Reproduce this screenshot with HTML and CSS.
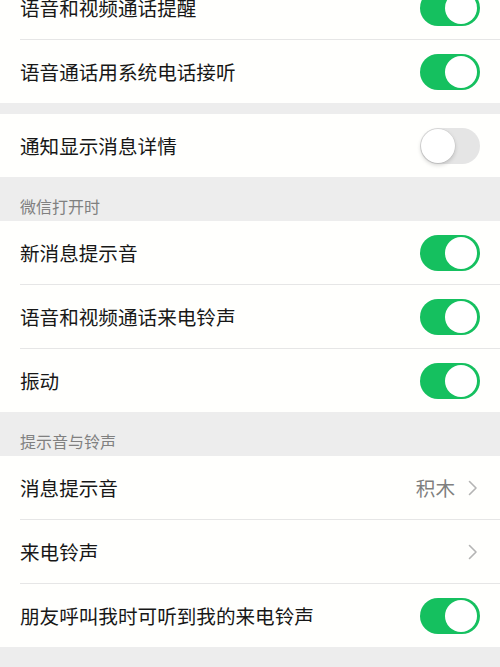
FILE: index.html
```html
<!DOCTYPE html>
<html>
<head>
  <title>新消息通知</title>
  <meta charset="UTF-8">
  <meta name="viewport" content="width=device-width, initial-scale=1">
  <link rel="stylesheet" href="styles.css">
</head>
<body>
  <div class="page">
    <div class="group group-top">
      <div class="row">
        <span class="label">语音和视频通话提醒</span>
        <span class="switch on"></span>
      </div>
      <div class="row">
        <span class="label">语音通话用系统电话接听</span>
        <span class="switch on"></span>
      </div>
    </div>

    <div class="spacer"></div>

    <div class="group">
      <div class="row">
        <span class="label">通知显示消息详情</span>
        <span class="switch"></span>
      </div>
    </div>

    <div class="section-title">微信打开时</div>
    <div class="group">
      <div class="row">
        <span class="label">新消息提示音</span>
        <span class="switch on"></span>
      </div>
      <div class="row">
        <span class="label">语音和视频通话来电铃声</span>
        <span class="switch on"></span>
      </div>
      <div class="row">
        <span class="label">振动</span>
        <span class="switch on"></span>
      </div>
    </div>

    <div class="section-title">提示音与铃声</div>
    <div class="group">
      <div class="row">
        <span class="label">消息提示音</span>
        <span class="extra">
          <span class="value">积木</span>
          <svg class="chevron" width="10" height="16" viewBox="0 0 10 16"><path d="M1.5 1.5 L8 8 L1.5 14.5" fill="none" stroke="#b4b4b4" stroke-width="1.6" stroke-linecap="round" stroke-linejoin="round"/></svg>
        </span>
      </div>
      <div class="row">
        <span class="label">来电铃声</span>
        <span class="extra">
          <svg class="chevron" width="10" height="16" viewBox="0 0 10 16"><path d="M1.5 1.5 L8 8 L1.5 14.5" fill="none" stroke="#b4b4b4" stroke-width="1.6" stroke-linecap="round" stroke-linejoin="round"/></svg>
        </span>
      </div>
      <div class="row">
        <span class="label">朋友呼叫我时可听到我的来电铃声</span>
        <span class="switch on"></span>
      </div>
    </div>
  </div>
</body>
</html>
```

FILE: styles.css
```css
body {
  font-family: "Noto Sans CJK SC", "Noto Sans", sans-serif;
  background: #ededed;
  margin: 0;
  padding: 0;
}
.page {
  min-height: 667px;
}
.group {
  background: #fffffd;
}
.group-top {
  margin-top: -24px;
}
.spacer {
  height: 11px;
}
.row {
  display: flex;
  align-items: center;
  justify-content: space-between;
  height: 63px;
  margin-left: 20px;
  padding-right: 20px;
}
.row + .row {
  border-top: 1px solid #e6e6e6;
}
.label {
  font-size: 19.6px;
  color: #171717;
}
.section-title {
  height: 44px;
  display: flex;
  align-items: flex-end;
  padding: 0 20px 5px 20px;
  box-sizing: border-box;
  font-size: 16px;
  line-height: 20px;
  color: #808080;
}
.extra {
  display: flex;
  align-items: center;
  gap: 13px;
  padding-right: 2px;
}
.value {
  font-size: 19.6px;
  color: #7f7f7f;
}
.chevron {
  display: block;
}
.switch {
  position: relative;
  width: 60px;
  height: 36px;
  border-radius: 18px;
  background: #e5e5e5;
  box-sizing: border-box;
  flex-shrink: 0;
}
.switch::after {
  content: "";
  position: absolute;
  top: 1px;
  left: 1px;
  width: 34px;
  height: 34px;
  border-radius: 50%;
  background: #fff;
  box-shadow: 0 2px 4px rgba(0,0,0,0.18), 0 0 0 0.5px rgba(0,0,0,0.08);
}
.switch.on {
  background: #15c05f;
}
.switch.on::after {
  left: 25px;
  top: 2px;
  width: 32px;
  height: 32px;
  box-shadow: none;
}
```
